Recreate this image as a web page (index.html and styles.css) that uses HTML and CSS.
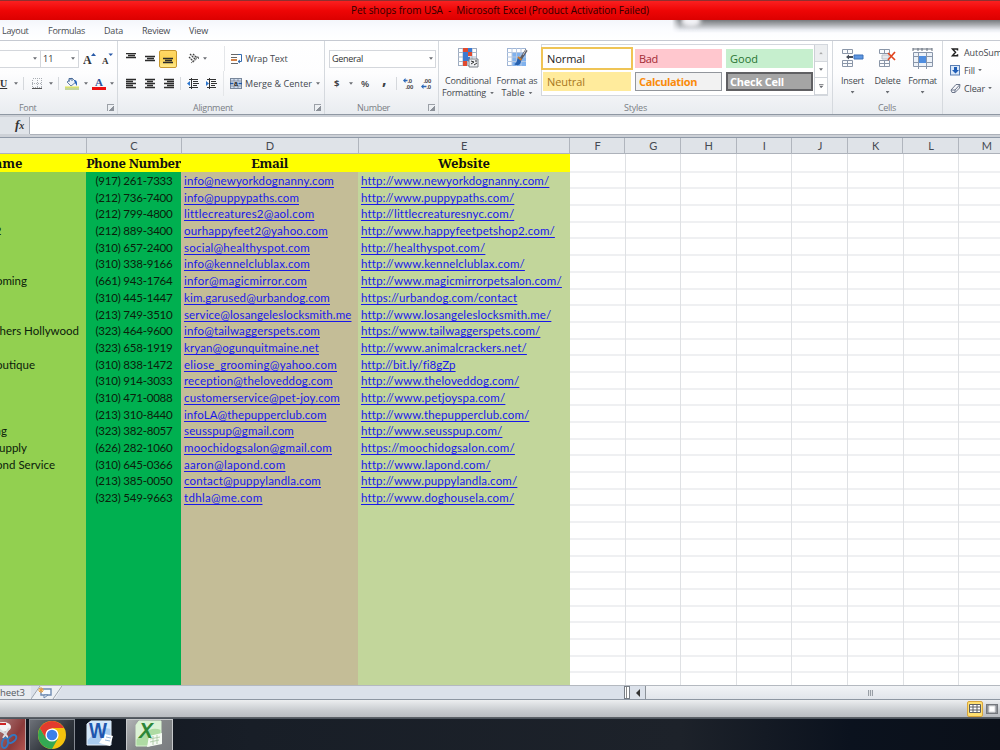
FILE: index.html
```html
<!DOCTYPE html>
<html lang="en">
<head>
<meta charset="utf-8">
<title>Pet shops from USA - Microsoft Excel</title>
<link rel="stylesheet" href="styles.css">
</head>
<body>
<div class="app">
  <header class="titlebar"><span data-w="298">Pet shops from USA&nbsp; -&nbsp; Microsoft Excel (Product Activation Failed)</span></header>
  <nav class="tabs">
    <div class="glow"></div>
    <span class="tab tab-layout" data-w="26.5">Layout</span>
    <span class="tab tab-formulas" data-w="37">Formulas</span>
    <span class="tab tab-data" data-w="19">Data</span>
    <span class="tab tab-review" data-w="28">Review</span>
    <span class="tab tab-view" data-w="19">View</span>
  </nav>

  <main class="ribbon">
    <section class="group g-font">
      <div class="row">
        <div class="combo name"><i class="arr"></i></div>
        <div class="combo size"><span>11</span><i class="arr"></i></div>
        <div class="ico w18 grow"><svg width="13" height="14"><text x="0" y="12" class="serif-a">A</text><path d="M8 4L10.500 1 13 4z" fill="#2859a8"/></svg></div>
        <div class="ico w18"><svg width="12" height="14"><text x="1" y="12" class="serif-a small">A</text><path d="M7.500 1.500h4.500L9.700 4z" fill="#2859a8"/></svg></div>
      </div>
      <div class="row">
        <div class="ico w14 left"><b class="underline">U</b></div><i class="arr"></i>
        <i class="sep s1"></i>
        <div class="ico w26"><svg width="10" height="11" shape-rendering="crispEdges"><path d="M.5 .5h9v9h-9zM5 0v10M0 5h10" fill="none" stroke="#a9adb3" stroke-dasharray="1 1"/><path d="M0 10h10" stroke="#555"/></svg></div><i class="arr"></i>
        <i class="sep s1"></i>
        <div class="ico w26"><svg width="14" height="14"><rect y="10" width="14" height="3" fill="#c3d69b"/><rect y="9.500" width="14" height="1" fill="#e8e84a"/><path d="M2 5l5-4 4 4-5 4z" fill="#eef3f9" stroke="#6683a9"/><path d="M4 5V1.500h3V4" fill="none" stroke="#486a99"/><path d="M9 3c3 0 3 2 3 6l-2-3z" fill="#2161b8"/></svg></div><i class="arr"></i>
        <div class="ico w22"><svg width="14" height="14"><text x="3" y="9" class="serif-a fontcolor">A</text><rect y="10" width="14" height="3" fill="#ee1111"/></svg></div><i class="arr"></i>
      </div>
      <div class="caption"><span class="cap-font" data-w="17.500">Font</span><i class="launch"></i></div>
    </section>

    <section class="group g-align">
      <div class="row">
        <div class="ico w19 first"><svg class="lines" viewBox="0 0 10 11"><path d="M0 .5h10M2 2.500h7M0 4.500h10"/></svg></div>
        <div class="ico w19"><svg class="lines" viewBox="0 0 10 11"><path d="M0 3.500h10M2 5.500h7M0 7.500h10"/></svg></div>
        <div class="ico w18 active"><svg class="lines" viewBox="0 0 10 11"><path d="M0 5.500h10M2 7.500h7M0 9.500h10"/></svg></div>
        <div class="ico orient"><svg width="12" height="12"><path d="M2 1l6 6M1 4l5 5M5 1l4 4" stroke="#444" stroke-width="1.300" stroke-dasharray="2 .6"/><path d="M3 10l7-6M8 4h2.500v2" fill="none" stroke="#777"/></svg></div><i class="arr"></i>
        <i class="sep tall"></i>
        <div class="ico wraps"><svg width="12" height="12"><path d="M0 1.500h8M0 4.500h6M0 10.500h7" stroke="#666"/><path d="M0 7h6" stroke="#d48348" stroke-width="2"/><path d="M7 1.500h3.500v7H7M9 7L7 8.500 9 10" fill="none" stroke="#346cb0"/></svg></div>
        <span class="txt" data-w="42">Wrap Text</span>
      </div>
      <div class="row">
        <div class="ico w19 first"><svg class="lines" viewBox="0 0 10 11"><path d="M0 1.500h10M0 3.500h7M0 5.500h10M0 7.500h7M0 9.500h10"/></svg></div>
        <div class="ico w19"><svg class="lines" viewBox="0 0 10 11"><path d="M0 1.500h10M2 3.500h6M0 5.500h10M2 7.500h6M0 9.500h10"/></svg></div>
        <div class="ico w19"><svg class="lines" viewBox="0 0 10 11"><path d="M0 1.500h10M3 3.500h7M0 5.500h10M3 7.500h7M0 9.500h10"/></svg></div>
        <i class="sep s2"></i>
        <div class="ico w18"><svg width="12" height="12"><path d="M2 1.500h9M6 3.500h5M6 5.500h6M6 7.500h4M2 9.500h9M4.500 0v11" stroke="#333"/><path d="M0 5.500L3 3v5z" fill="#2b75cc"/></svg></div>
        <div class="ico w18"><svg width="12" height="12"><path d="M2 1.500h9M6 3.500h5M6 5.500h6M6 7.500h4M2 9.500h9M4.500 0v11" stroke="#333"/><path d="M4 5.500L1 3v5z" fill="#2b75cc"/></svg></div>
        <i class="sep tall t2"></i>
        <div class="ico wraps"><svg width="12" height="12"><rect x=".5" y=".5" width="11" height="10" fill="#cfddef" stroke="#78879b"/><path d="M1 3h10M1 8h10M4 0v3M8 0v3M4 8v3M8 8v3" stroke="#78879b" stroke-width=".8"/><text x="4" y="7.800" class="tiny-a">a</text><path d="M0 5.500h3.500M8.500 5.500H12" stroke="#2256a0" stroke-width="1.500"/></svg></div>
        <span class="txt" data-w="67">Merge &amp; Center</span><i class="arr gap5"></i>
      </div>
      <div class="caption"><span class="cap-align" data-w="40">Alignment</span><i class="launch"></i></div>
    </section>

    <section class="group g-number">
      <div class="row"><div class="combo format"><span data-w="31">General</span><i class="arr"></i></div></div>
      <div class="row">
        <b class="sym dollar">$</b><i class="arr gap10"></i><b class="sym pct">%</b><b class="sym comma">,</b>
        <i class="sep s3"></i>
        <div class="ico w18"><svg width="12" height="12"><text x="4.500" y="5" class="digits">.0</text><text x="2.500" y="11" class="digits">.00</text><path d="M0 2.500L2.500 0v1.700h2v1.600h-2V5z" fill="#2b67b7"/></svg></div>
        <div class="ico w18"><svg width="12" height="12"><text x="2.500" y="5" class="digits">.00</text><text x="5.500" y="11" class="digits">.0</text><path d="M0 8.500L2.500 6v1.700h3v1.600h-3V11z" fill="#2b67b7"/></svg></div>
      </div>
      <div class="caption"><span class="cap-number" data-w="33">Number</span><i class="launch"></i></div>
    </section>

    <section class="group g-styles">
      <div class="styles-body">
        <div class="big cond"><svg width="22" height="22" viewBox="0 0 22 22"><rect x="1.500" y="1.500" width="18" height="17" fill="#fff" stroke="#9eacc0"/><path d="M1 5.500h19M1 10h19M1 14.500h19M6 1v18M10.500 1v18M15 1v18" stroke="#a9b6c9"/><path d="M6 1h5v4H6zM11 5h4v4h-4zM6 14h4v5H6z" fill="#e04a2f"/><path d="M6 5h5v5H6zM11 1h4v4h-4zM6 10h7v4H6z" fill="#3b79d0"/><path d="M12 12h9v8h-9z" fill="#eceef2" stroke="#7b8087"/><path d="M14 14l3 1-3 2M18 14h2M17 18l3-2" fill="none" stroke="#333"/></svg>
          <span data-w="46">Conditional</span><span class="ln"><span data-w="44">Formatting</span><i class="arr"></i></span></div>
        <div class="big table"><svg width="22" height="22" viewBox="0 0 22 22"><rect x="1.500" y="1.500" width="18" height="17" fill="#fff" stroke="#9fb5d5"/><path d="M6 6h14v13H6z" fill="#80b2ee"/><path d="M1 5.500h19M1 10h19M1 14.500h19M6 1v18M10.500 1v18M15 1v18" stroke="#b5c8e2"/><path d="M20.500 3L14 13" stroke="#5b5c65" stroke-width="2.600"/><path d="M20 3l-3 5" stroke="#c5c5ca"/><path d="M15 12l-2-2c-3 2-1 6-5 7 4 3 8 0 7-5z" fill="#2761ae"/><path d="M12 10l3.500 3" stroke="#c57a32" stroke-width="2"/></svg>
          <span data-w="41">Format as</span><span class="ln"><span data-w="23">Table</span><i class="arr"></i></span></div>
        <div class="gallery">
          <div class="cells">
            <div class="st normal"><span data-w="38">Normal</span></div><div class="st bad"><span data-w="19">Bad</span></div><div class="st good"><span data-w="28">Good</span></div>
            <div class="st neutral"><span data-w="38">Neutral</span></div><div class="st calc"><span data-w="58">Calculation</span></div><div class="st check"><span data-w="54">Check Cell</span></div>
          </div>
          <div class="scroller"><div class="dim"><i class="arr up"></i></div><div><i class="arr"></i></div><div><i class="arr more"></i></div></div>
        </div>
      </div>
      <div class="caption"><span class="cap-styles" data-w="23">Styles</span></div>
    </section>

    <section class="group g-cells">
      <div class="cells-body">
        <div class="big insert"><svg width="22" height="22" viewBox="0 0 22 22"><path d="M.5 1.500h10v4H.5zM.5 12.500h10v6H.5zM5.500 1v5M5.500 12v7M.5 15.500h10" fill="#fafbfd" stroke="#8a96a8"/><path d="M12 7h9v4h-9z" fill="#5c96e2" stroke="#3d70b8"/><path d="M4 9l3-2.500V8h4v2H7v1.500z" fill="#454c59"/></svg><span data-w="23">Insert</span><i class="arr"></i></div>
        <div class="big delete"><svg width="22" height="22" viewBox="0 0 22 22"><path d="M2.500 1.500h10v4h-10zM2.500 12.500h10v6h-10zM7.500 1v5M7.500 12v7M2.500 15.500h10" fill="#fafbfd" stroke="#8a96a8"/><path d="M5 7h7v4H5z" fill="#e5e8ed" stroke="#b9bec7"/><path d="M11 5l7 7M18 4l-7 8" stroke="#e1451f" stroke-width="1.700"/></svg><span data-w="26">Delete</span><i class="arr"></i></div>
        <div class="big fmt"><svg width="22" height="22" viewBox="0 0 22 22"><path d="M1 1h19M1 0v3M6 0v3M10 0v3M15 0v3M20 0v3" stroke="#656e7c"/><path d="M1.500 4.500h19v14h-19z" fill="#edf2f8" stroke="#8996aa"/><path d="M1 8.500h20M1 14.500h20M6.500 4v17M14.500 4v17" stroke="#8996aa"/><path d="M7 8h7v7H7z" fill="#4f8ddf"/></svg><span data-w="28.500">Format</span><i class="arr"></i></div>
      </div>
      <div class="caption"><span class="cap-cells" data-w="18">Cells</span></div>
    </section>

    <section class="group g-edit">
      <div class="erow"><svg width="11" height="11"><path d="M7.500 3.500V2h-5L5.500 5.300 2.500 8.700h5V7.200" fill="none" stroke="#222" stroke-width="1.500"/></svg><span data-w="38">AutoSum</span></div>
      <div class="erow"><svg width="11" height="11"><rect x=".5" y=".5" width="9" height="9.500" fill="#dbe9fa" stroke="#5a7fb4"/><path d="M4 2h3v3h2L5.500 8.500 2 5h2z" fill="#1e5db7"/></svg><span data-w="11">Fill</span><i class="arr"></i></div>
      <div class="erow"><svg width="11" height="11"><path d="M1 7l5-5.500h4L9.500 5 5 9.500H2z" fill="#f5f6fa" stroke="#6d778b"/><path d="M1 7h4l4.500-5M5 7v2.500" fill="none" stroke="#6d778b"/></svg><span data-w="21">Clear</span><i class="arr"></i></div>
    </section>
  </main>

  <div class="formula"><div class="fx"><i>f</i><i class="x">x</i></div><div class="input"></div></div>

  <div class="sheet">
    <div class="colheads"><span></span><span>C</span><span>D</span><span>E</span><span>F</span><span>G</span><span>H</span><span>I</span><span>J</span><span>K</span><span>L</span><span>M</span></div>
    <div class="data">
      <div class="col names"><div class="th"><span data-end="22.500">ame</span></div></div>
      <div class="col phones"><div class="th"><span data-w="95">Phone Number</span></div></div>
      <div class="col emails"><div class="th"><span data-w="37">Email</span></div></div>
      <div class="col sites"><div class="th"><span data-w="52">Website</span></div></div>
      <div class="empty"></div>
    </div>
  </div>

  <div class="sheetbar">
    <div class="sheettab"><span data-w="25">heet3</span></div>
    <svg class="newtab" width="36" height="14"><path d="M0 13L8 0h24l-8 13z" fill="#edf0f4"/><path d="M0 13L9 0M22 13L31 0" stroke="#9da4ae"/><path d="M10 3h10v6H10z" fill="#f6faff" stroke="#6d89b0" stroke-width="1.400"/><path d="M13 12v-3h4z" fill="#fff" stroke="#6d89b0"/><path d="M10 1v6M7 4h6M8 2l4 4M12 2L8 6" stroke="#efa13d"/></svg>
    <div class="split"></div>
    <div class="sleft"></div>
    <div class="track"><i class="grip"></i></div>
  </div>

  <div class="status">
    <div class="view on"><svg width="12" height="10"><path d="M.5 .5h11v8H.5zM0 3h12M0 6h12M4 0v9M8 0v9" fill="#fff" stroke="#5d5e62"/></svg></div>
    <div class="view"><svg width="12" height="10"><rect x=".5" y=".5" width="11" height="9" fill="#8e9196" stroke="#74777c"/><path d="M3 2h6v6H3z" fill="#fff" stroke="#d8d9db"/></svg></div>
  </div>

  <footer class="taskbar">
    <div class="task snip"><svg width="26" height="32"><ellipse cx="3" cy="8" rx="8" ry="5" fill="#f3f3f3"/><path d="M-2 8C0 14 6 12 8 20M9 9L3 19" fill="none" stroke="#d9dce0" stroke-width="2"/><ellipse cx="5" cy="24" rx="3" ry="5" transform="rotate(15 5 24)" fill="none" stroke="#3478c0" stroke-width="2"/><ellipse cx="12" cy="20" rx="3" ry="5" transform="rotate(50 12 20)" fill="none" stroke="#3478c0" stroke-width="2"/><path d="M-1 5h7" stroke="#cf2424" stroke-width="2"/></svg></div>
    <div class="task chrome"><svg width="28" height="28" viewBox="0 0 28 28"><circle cx="14" cy="14" r="14" fill="#f4c20d"/><path d="M1.900 7A14 14 0 0 0 14 28L20 17.500 14 14H6z" fill="#34a853"/><path d="M1.900 7A14 14 0 0 1 26.100 7H14l-6 10.500z" fill="#e33b2e"/><circle cx="14" cy="14" r="6.600" fill="#fff"/><circle cx="14" cy="14" r="5.300" fill="#3b7fe8"/></svg></div>
    <div class="task word"><svg width="28" height="28" viewBox="0 0 28 28"><path d="M5 1h20v24H1V4z" fill="#abcdf0" stroke="#e6f1fc"/><path d="M5 1h20v8C16 6 9 12 1 21V4z" fill="#d5e8fa"/><path d="M19 14l8 2-3 10-11-3" fill="#fff"/><path d="M20 17l5 1M19 20l5 1" stroke="#9ab9d9"/><text x="3" y="18" class="logo-w" textLength="18" lengthAdjust="spacingAndGlyphs">W</text></svg></div>
    <div class="task excel"><svg width="28" height="28" viewBox="0 0 28 28"><path d="M4 1h22v21L14 26H1V5z" fill="#aedba3" stroke="#d8f3d0"/><path d="M4 1h22v9C16 6 9 12 1 20V5z" fill="#dcf2d6"/><path d="M14 16l13-3v11l-15 3z" fill="#f4faf2"/><path d="M15 19l10-2M15 22l9-2M18 16v9M22 15v9" stroke="#b1cdaa"/><text x="4" y="18" class="logo-x" textLength="14" lengthAdjust="spacingAndGlyphs">X</text></svg></div>
  </footer>
</div>
<script src="app.js"></script>
</body>
</html>
```

FILE: styles.css
```css
* { box-sizing: border-box; }
body { margin: 0; overflow: hidden; font-family: "Open Sans", "Noto Sans", sans-serif; }
.app { width: 1000px; height: 750px; display: flex; flex-direction: column; overflow: hidden; background: #fff; }
.app > * { flex: none; }
[data-w] { display: inline-block; white-space: nowrap; }
svg { display: block; flex: none; }

.titlebar { height: 19.500px; border-top: 1px solid #8d3030; background: linear-gradient(#fa2020, #ee0606 50%, #dc0000); text-align: center; font-size: 10px; line-height: 19px; color: #300000; }
.tabs { height: 21.500px; position: relative; display: flex; background: linear-gradient(#f4f6fb, #fbfcff 45%, #fff); border-bottom: 1px solid #c6cad2; font-size: 9px; line-height: 22px; color: #484b4f; }
.glow { position: absolute; left: 672px; right: 0; top: 0; height: 13px; background: linear-gradient(#777a7e, #a7aaae 35%, #e8eaf0 75%, transparent); -webkit-mask-image: linear-gradient(90deg, transparent, #000 8px); mask-image: linear-gradient(90deg, transparent, #000 8px); }
.glow::after { content: ""; position: absolute; left: 9px; top: -5px; width: 20px; height: 12px; border-radius: 50%; background: #f2f2f6; filter: blur(2px); }
.tab-layout { margin-left: 2px; }
.tab-formulas { margin-left: 19.500px; }
.tab-data { margin-left: 19px; }
.tab-review { margin-left: 19px; }
.tab-view { margin-left: 19px; }

.ribbon { height: 74px; display: flex; background: linear-gradient(#fff, #fdfdfe 45%, #f0f2f5 80%, #e9ecf0); border-bottom: 1px solid #8f98a3; color: #43474d; font-size: 9px; }
.group { height: 73px; padding-top: 5px; border-right: 1px solid #d5d9de; display: flex; flex-direction: column; flex: none; }
.g-font { width: 118px; } .g-align { width: 207px; } .g-number { width: 114px; } .g-styles { width: 394px; } .g-cells { width: 110px; } .g-edit { width: 57px; border: 0; padding-top: 2px; }
.row { height: 25px; display: flex; align-items: center; flex: none; }
.caption { height: 18px; padding: 4px 3px 0 0; display: flex; align-items: center; justify-content: space-between; color: #7a7e85; flex: none; }
.cap-font { margin-left: 19px; } .cap-align { margin-left: 75px; } .cap-number { margin-left: 32px; } .cap-styles { margin-left: 185px; } .cap-cells { margin-left: 45px; }
.launch { width: 7px; height: 7px; border: solid #9ba0a7; border-width: 1px 0 0 1px; background: linear-gradient(135deg, transparent 55%, #8c9199 56%); background-size: 6px 6px; background-repeat: no-repeat; }
.arr { width: 4px; height: 2.500px; background: #6b6e73; clip-path: polygon(0 0, 100% 0, 50% 100%); flex: none; }
.arr.up { transform: scaleY(-1); background: #aaa; }
.arr.more { height: 4px; width: 5px; clip-path: polygon(0 0, 100% 0, 100% 20%, 0 20%, 0 40%, 100% 40%, 50% 100%); }
.gap5 { margin-left: 4px; } .gap10 { margin-left: 9px; }
.sep { width: 1px; height: 13px; background: #d5d8dc; flex: none; }
.s1 { margin-left: 5px; } .s2 { margin-left: 2px; margin-right: 3px; } .s3 { margin-left: 9px; margin-right: 3px; }
.tall { height: 25px; margin-left: 17px; background: #e4e6e9; }
.t2 { margin-left: 3px; }
.ico { height: 18px; display: flex; align-items: center; justify-content: center; flex: none; }
.w14 { width: 14px; } .w18 { width: 18px; } .w19 { width: 19px; } .w22 { width: 22px; } .w26 { width: 26px; }
.g-font .w26 { width: 25px; }
.grow { margin-left: 1px; }
.left { justify-content: flex-start; }
.underline { font: bold 10px "Liberation Serif", serif; text-decoration: underline; color: #333; }
.first { margin-left: 3px; }
.combo { height: 18px; border: 1px solid #d4d7dc; background: #fff; display: flex; align-items: center; justify-content: space-between; color: #333; }
.name { width: 41px; border-left: 0; justify-content: flex-end; padding-right: 3px; }
.size { width: 38px; border-left: 0; padding: 0 3px 0 2px; font-size: 9px; }
.format { width: 107px; margin-left: 4px; padding: 0 2px 0 2px; }
.serif-a { font: bold 12px "Liberation Serif", serif; fill: #333; }
.small { font-size: 9px; }
.fontcolor { font-size: 11px; fill: #2c5398; }
.lines { width: 10px; height: 11px; stroke: #2c2c2c; stroke-width: 1.300; }
.active { border: 1px solid #c7972d; border-radius: 2px; background: linear-gradient(#ffd866, #fbd252 50%, #ffe989); }
.orient { width: 16px; margin-left: 9px; }
.orient + .arr { margin-left: 1px; }
.orient ~ .tall { margin-left: 16.500px; }
.wraps { width: 12px; margin: 0 3px 0 6px; }
.tiny-a { font: bold 7px "Liberation Sans", sans-serif; fill: #222; }
.sym { font-size: 9.500px; color: #3e4146; }
.dollar { margin-left: 9px; width: 6px; }
.pct { margin-left: 8px; width: 9px; font-weight: 600; }
.comma { margin-left: 12px; width: 5px; line-height: 8px; font-size: 16px; margin-top: -9px; }
.digits { font: bold 6px "Liberation Sans", sans-serif; fill: #444; letter-spacing: -.3px; }

.styles-body { display: flex; height: 50px; flex: none; }
.big { display: flex; flex-direction: column; align-items: center; line-height: 12px; }
.big svg { margin-bottom: 6px; }
.cond { width: 50px; margin-left: 4px; margin-top: 1px; }
.table { width: 48px; margin-top: 1px; }
.ln { display: flex; align-items: center; gap: 4px; }
.gallery { height: 52px; width: 287px; margin-top: -2px; border: 1px solid #d3d7dd; background: #fff; display: flex; }
.cells { width: 273px; display: grid; grid-template-columns: 88px 87px 87px; grid-template-rows: 19px 19px; gap: 4px 4px; padding: 4px 0 0 1px; }
.st { font-size: 11px; line-height: 19px; padding-left: 4px; white-space: nowrap; }
.normal { outline: 2px solid #efc455; color: #222; }
.bad { background: #ffc7ce; color: #a22b35; }
.good { background: #c6efce; color: #287432; }
.neutral { background: #ffeb9c; color: #a87820; }
.calc { background: #f2f2f2; border: 1px solid #92969c; color: #fa8b0a; font-weight: bold; line-height: 17px; padding-left: 3px; }
.check { background: #a5a5a5; border: 2px solid #606063; color: #fff; font-weight: bold; line-height: 15px; padding-left: 2px; }
.scroller { width: 13px; flex: none; border-left: 1px solid #ccd0d6; display: flex; flex-direction: column; }
.scroller div { flex: 1; display: flex; align-items: center; justify-content: center; border-bottom: 1px solid #d3d7dc; }
.scroller .dim { background: #eceef0; }

.cells-body { height: 50px; display: flex; padding-left: 2px; flex: none; }
.cells-body .big { width: 35px; }
.cells-body .big svg { margin: 2px 0 5px; }
.cells-body .big > span { line-height: 12px; margin-bottom: 4px; }
.erow { height: 18px; display: flex; align-items: center; gap: 3px; padding-left: 7px; flex: none; }
.erow span { flex: none; }

.formula { height: 23px; display: flex; background: #cdd1d7; padding: 2px 0 3px; border-bottom: 1px solid #8f99a7; }
.fx { width: 30px; height: 17px; border-right: 1px solid #aab0b9; background: #e0e4e9; padding: 0 4px 0 15px; font: bold 13px/16px "Liberation Serif", serif; color: #333; display: flex; }
.fx .x { font-size: 10px; line-height: 18px; }
.input { flex: 1; height: 18px; background: #fff; border-bottom: 1px solid #adb2ba; }

.sheet { height: 547px; overflow: hidden; }
.colheads { width: 1015px; height: 16px; display: grid; grid-template-columns: 86.500px 95px 177px 211.300px repeat(8, 55.600px); background: #dfe3e8; border-bottom: 1px solid #adb2ba; }
.colheads span { border-right: 1px solid #b0b5bd; text-align: center; padding-left: 1px; font: 11px/16px Lato, sans-serif; color: #454a52; }
.data { width: 1015px; height: 531px; display: grid; grid-template-columns: 86px 95.300px 176.700px 212px 445px; }
.col { font: 11.500px/16.700px Lato, "Open Sans", sans-serif; color: #0b200b; }
.th { height: 18px; background: #ff0; font: bold 13px/19px "Noto Serif", "DejaVu Serif", serif; color: #111; text-align: center; }
.cell { height: 16.700px; padding-top: 1px; white-space: nowrap; }
.names { background: #92d050; overflow: hidden; }
.names .th { text-align: left; }
.names span { display: inline-block; }
.phones { background: #00b050; }
.phones .cell { padding-left: 9.500px; }
.emails { background: #c4bd97; }
.emails .cell { padding-left: 2.700px; }
.sites { background: #c2d69b; }
.sites .cell { padding-left: 3px; }
.cell a { color: #1818ea; text-decoration: underline; text-underline-offset: 1.500px; text-decoration-thickness: 1px; text-decoration-skip-ink: none; }
.empty { background-image: repeating-linear-gradient(90deg, transparent 0 54.600px, #dfe1e4 54.600px 55.600px), repeating-linear-gradient(transparent 0 15.690px, #dfe1e4 15.690px 16.690px); background-position: 0 0, 0 1.500px; }

.sheetbar { height: 15px; display: flex; background: #dbe1ea; border-top: 1px solid #b4b9c0; border-bottom: 1px solid #8d96a2; }
.sheettab { width: 31px; font: 9.500px/13px "Open Sans", sans-serif; color: #555a61; background: #e8ebf0; }
.newtab { width: 36px; }
.split { margin-left: 557px; width: 6px; height: 13px; border: 1px solid #777d85; background: linear-gradient(90deg, #fff 1px, #888 1px 2px, #fff 2px); flex: none; }
.sleft { width: 15px; display: flex; align-items: center; justify-content: center; }
.sleft::before { content: ""; border: solid transparent; border-width: 4px 4px 4px 0; border-right-color: #333; }
.track { flex: 1; border-left: 1px solid #8c9299; background: linear-gradient(#f1f3f6, #e1e5eb); display: flex; align-items: center; padding-left: 222px; }
.grip { width: 5px; height: 6px; background: repeating-linear-gradient(90deg, #999fa6 0 1px, #dfe2e6 1px 2px); }
.status { height: 18px; display: flex; justify-content: flex-end; gap: 1px; align-items: center; background: linear-gradient(#eceef0, #c9ccd0 60%, #b9bcc1); border-bottom: 1px solid #5b6066; }
.view { width: 15px; height: 16px; display: flex; align-items: center; justify-content: center; margin-right: 1px; }
.view.on { border: 1px solid #d9a63c; background: #ffdf70; border-radius: 2px; width: 16px; margin-right: 0; }

.taskbar { height: 33px; border-top: 1px solid #4d545d; background: linear-gradient(90deg, #10151f, #181e27 25%, #1d222a 68%, #0b121e 85%, #0b1019); display: flex; }
.task { height: 32px; display: flex; align-items: center; justify-content: center; flex: none; overflow: hidden; }
.snip { width: 26px; background: linear-gradient(120deg, #a77, #8a3a3a 60%, #b55550); border-right: 1px solid #b9a4a4; }
.chrome { width: 46px; margin-left: 3px; border: 1px solid #858a92; background: linear-gradient(135deg, #6d7178, #30353c 60%, #20252c); }
.word { width: 51px; padding: 0 2px 3px 0; }
.excel { width: 47px; padding: 0 2px 2px 0; border: 1px solid #c6c8ca; background: linear-gradient(135deg, #b0b2b4, #85888a 50%, #7a7d80); }
.logo-w { font: bold 22px "Liberation Sans", sans-serif; fill: #1f56ae; }
.logo-x { font: italic bold 22px "Liberation Sans", sans-serif; fill: #2c8637; }
```

FILE: app.js
```js
const names = { 3: ["2", 1.5], 6: ["oming", 27], 9: ["hers Hollywood", 79], 11: ["outique", 35], 15: ["ng", 7], 16: ["upply", 27], 17: ["ond Service", 55] };
const rows = [
  ["(917) 261-7333", "info@newyorkdognanny.com", 150, "http://www.newyorkdognanny.com/", 188],
  ["(212) 736-7400", "info@puppypaths.com", 115, "http://www.puppypaths.com/", 153],
  ["(212) 799-4800", "littlecreatures2@aol.com", 130, "http://littlecreaturesnyc.com/", 152.5],
  ["(212) 889-3400", "ourhappyfeet2@yahoo.com", 144, "http://www.happyfeetpetshop2.com/", 193.5],
  ["(310) 657-2400", "social@healthyspot.com", 126, "http://healthyspot.com/", 124],
  ["(310) 338-9166", "info@kennelclublax.com", 126, "http://www.kennelclublax.com/", 163.5],
  ["(661) 943-1764", "infor@magicmirror.com", 123, "http://www.magicmirrorpetsalon.com/", 200.5],
  ["(310) 445-1447", "kim.garused@urbandog.com", 146, "https://urbandog.com/contact", 156],
  ["(213) 749-3510", "service@losangeleslocksmith.me", 167.5, "http://www.losangeleslocksmith.me/", 190],
  ["(323) 464-9600", "info@tailwaggerspets.com", 136, "https://www.tailwaggerspets.com/", 179],
  ["(323) 658-1919", "kryan@ogunquitmaine.net", 135, "http://www.animalcrackers.net/", 165.5],
  ["(310) 838-1472", "eliose_grooming@yahoo.com", 153, "http://bit.ly/fi8gZp", 94],
  ["(310) 914-3033", "reception@theloveddog.com", 149, "http://www.theloveddog.com/", 158],
  ["(310) 471-0088", "customerservice@pet-joy.com", 156, "http://www.petjoyspa.com/", 144],
  ["(213) 310-8440", "infoLA@thepupperclub.com", 142.5, "http://www.thepupperclub.com/", 168],
  ["(323) 382-8057", "seusspup@gmail.com", 110, "http://www.seusspup.com/", 141],
  ["(626) 282-1060", "moochidogsalon@gmail.com", 148, "https://moochidogsalon.com/", 153.5],
  ["(310) 645-0366", "aaron@lapond.com", 101.5, "http://www.lapond.com/", 129.5],
  ["(213) 385-0050", "contact@puppylandla.com", 137, "http://www.puppylandla.com/", 156],
  ["(323) 549-9663", "tdhla@me.com", 78.5, "http://www.doghousela.com/", 153]
];

function addCell(column, text, key, value, tag) {
  const cell = document.createElement("div");
  cell.className = "cell";
  if (text) {
    const item = document.createElement(tag);
    item.textContent = text;
    item.dataset[key] = value;
    cell.append(item);
  }
  document.querySelector(column).append(cell);
}

rows.forEach(([phone, email, emailWidth, site, siteWidth], i) => {
  const [name, nameEnd] = names[i] || ["", 0];
  addCell(".names", name, "end", nameEnd, "span");
  addCell(".phones", phone, "w", 77, "span");
  addCell(".emails", email, "w", emailWidth, "a");
  addCell(".sites", site, "w", siteWidth, "a");
});

// Track each label so that it fills its nominal width.
document.querySelectorAll("[data-w]").forEach((el) => {
  const count = el.textContent.length;
  if (count < 2) return;
  const spacing = (Number(el.dataset.w) - el.getBoundingClientRect().width) / count;
  el.style.letterSpacing = spacing.toFixed(3) + "px";
});

// The name column is scrolled partly out of view; anchor its texts by their right ends.
document.querySelectorAll("[data-end]").forEach((el) => {
  el.style.marginLeft = Math.min(0, Number(el.dataset.end) - el.getBoundingClientRect().width).toFixed(2) + "px";
});
```
